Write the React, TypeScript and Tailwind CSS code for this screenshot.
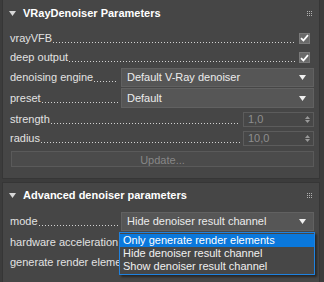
import React from 'react'

const font = { fontFamily: '"Liberation Sans", Arial, sans-serif' }

function Triangle() {
  return (
    <svg width="7" height="5" viewBox="0 0 7 5" className="shrink-0">
      <path d="M0 0 L7 0 L3.5 5 Z" fill="#d8d8d8" />
    </svg>
  )
}

function Grip() {
  return (
    <div className="grid grid-cols-3 gap-[1px]">
      {Array.from({ length: 9 }).map((_, i) => (
        <div key={i} className="w-[1px] h-[1px] bg-[#b0b0b0]" />
      ))}
    </div>
  )
}

function Header({ title }: { title: string }) {
  return (
    <div className="flex items-center h-full pl-[6px] pr-[7px]">
      <Triangle />
      <span className="ml-[7px] text-[11px] font-bold text-white">{title}</span>
      <div className="ml-auto">
        <Grip />
      </div>
    </div>
  )
}

// leader dots between a label and its control
function Dots() {
  return (
    <div className="flex-1 min-w-0 h-[1px] mt-[8px] ml-[1px] bg-[linear-gradient(to_right,#d2d2d2_1px,transparent_1px)] bg-[length:3px_1px] bg-repeat-x" />
  )
}

function Label({ text }: { text: string }) {
  return <span className="shrink-0 text-[#e2e2e2] whitespace-nowrap">{text}</span>
}

function Checkbox() {
  return (
    <div className="w-[11px] h-[11px] bg-[#6a6a6a] border border-[#7a7a7a] flex items-center justify-center shrink-0">
      <svg width="9" height="8" viewBox="0 0 9 8">
        <path d="M1 4.2 L3.4 6.5 L8 1.2" stroke="#ffffff" strokeWidth="1.8" fill="none" />
      </svg>
    </div>
  )
}

function Dropdown({ value }: { value: string }) {
  return (
    <div className="flex items-center w-[193px] h-full bg-[#565656] border border-[#616161] pl-[5px] pr-[7px] shrink-0">
      <span className="text-[#ececec] whitespace-nowrap">{value}</span>
      <svg width="7" height="5" viewBox="0 0 7 5" className="ml-auto">
        <path d="M0 0 L7 0 L3.5 5 Z" fill="#f0f0f0" />
      </svg>
    </div>
  )
}

function Spinner({ value }: { value: string }) {
  return (
    <div className="flex items-center w-[71px] h-[15px] bg-[#474747] border border-[#5c5c5c] pl-[4px] pr-[3px] shrink-0">
      <span className="text-[#8e8e8e]">{value}</span>
      <div className="ml-auto flex flex-col gap-[1px]">
        <svg width="5" height="3" viewBox="0 0 5 3">
          <path d="M0 3 L5 3 L2.5 0 Z" fill="#9a9a9a" />
        </svg>
        <svg width="5" height="3" viewBox="0 0 5 3">
          <path d="M0 0 L5 0 L2.5 3 Z" fill="#9a9a9a" />
        </svg>
      </div>
    </div>
  )
}

export default function App() {
  return (
    <div
      className="w-[324px] h-[282px] overflow-hidden bg-[#3c3c3c] text-[11px] pl-[2px] flex flex-col gap-[3px]"
      style={font}
    >
      <div className="w-[318px] bg-[#464646] border-x border-b border-[#363636] shrink-0">
        <div className="h-[26px]">
          <Header title="VRayDenoiser Parameters" />
        </div>
        <div className="pt-[2px] pl-[7px] pr-[5px] pb-[11px] flex flex-col">
          <div className="flex items-center h-[20px]">
            <Label text="vrayVFB" />
            <Dots />
            <div className="ml-[3px] mr-[4px]">
              <Checkbox />
            </div>
          </div>
          <div className="flex items-center h-[19px]">
            <Label text="deep output" />
            <Dots />
            <div className="ml-[3px] mr-[4px]">
              <Checkbox />
            </div>
          </div>
          <div className="flex items-center h-[21px] py-[1px]">
            <Label text="denoising engine" />
            <Dots />
            <div className="ml-[3px] h-full">
              <Dropdown value="Default V-Ray denoiser" />
            </div>
          </div>
          <div className="flex items-center h-[20px]">
            <Label text="preset" />
            <Dots />
            <div className="ml-[3px] h-full">
              <Dropdown value="Default" />
            </div>
          </div>
          <div className="flex items-center h-[21px] pt-[2px]">
            <Label text="strength" />
            <Dots />
            <div className="ml-[3px]">
              <Spinner value="1,0" />
            </div>
          </div>
          <div className="flex items-center h-[19px]">
            <Label text="radius" />
            <Dots />
            <div className="ml-[3px]">
              <Spinner value="10,0" />
            </div>
          </div>
          <button className="mt-[3px] ml-[1px] h-[16px] bg-[#4b4b4b] border border-[#5a5a5a] text-[#878787]">
            Update...
          </button>
        </div>
      </div>

      <div className="w-[318px] flex-1 bg-[#464646] border-x border-t border-[#363636]">
        <div className="h-[24px]">
          <Header title="Advanced denoiser parameters" />
        </div>
        <div className="pt-[4px] pl-[7px] pr-[5px] flex flex-col">
          <div className="flex items-center h-[21px] py-[1px]">
            <Label text="mode" />
            <Dots />
            <div className="ml-[3px] h-full relative">
              <Dropdown value="Hide denoiser result channel" />
              <div className="absolute left-[-2px] top-full mt-[1px] w-[196px] bg-[#474747] border border-[#1f82e0] shadow-[2px_2px_2px_rgba(0,0,0,0.45)] z-10 py-[1px]">
                <div className="h-[13px] leading-[13px] bg-[#0a78dc] text-white pl-[3px]">
                  Only generate render elements
                </div>
                <div className="h-[13px] leading-[13px] text-[#f0f0f0] pl-[3px]">
                  Hide denoiser result channel
                </div>
                <div className="h-[13px] leading-[13px] text-[#f0f0f0] pl-[3px]">
                  Show denoiser result channel
                </div>
              </div>
            </div>
          </div>
          <div className="flex items-center h-[20px]">
            <Label text="hardware acceleration" />
            <Dots />
            <div className="ml-[3px] mr-[4px]">
              <Checkbox />
            </div>
          </div>
          <div className="flex items-center h-[21px]">
            <Label text="generate render elements" />
            <Dots />
            <div className="ml-[3px] mr-[4px]">
              <Checkbox />
            </div>
          </div>
        </div>
      </div>
    </div>
  )
}
